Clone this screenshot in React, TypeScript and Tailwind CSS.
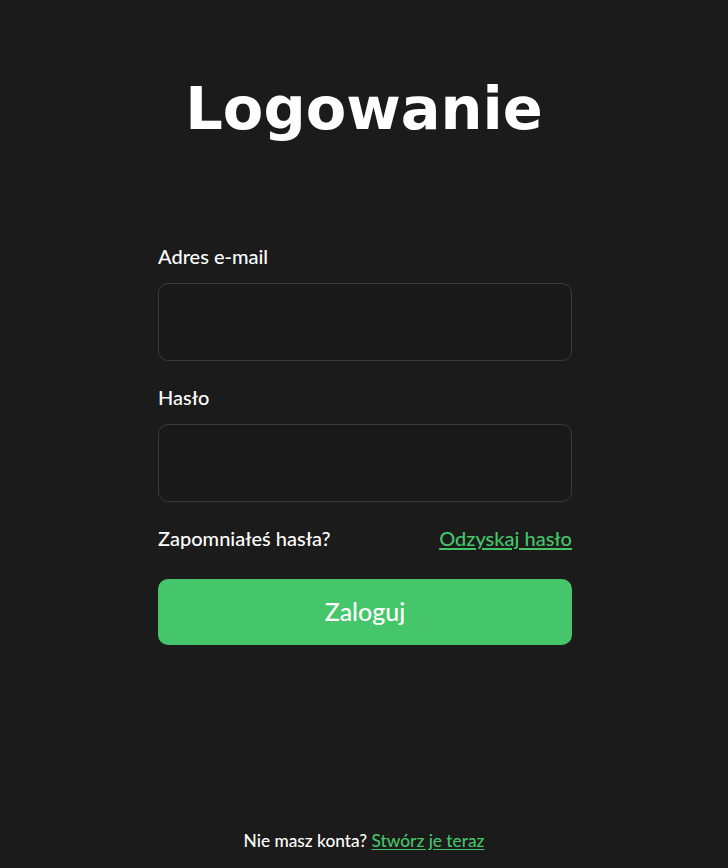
import React from "react";

const Field = ({ label, type }: { label: string; type: string }) => {
  return (
    <div className="flex flex-col">
      <label className="text-[20px] font-medium leading-[27px] text-white">{label}</label>
      <input
        type={type}
        className="mt-[13px] h-[78px] w-full rounded-[10px] border border-[#3a3a3a] bg-[#191919] px-4 text-white outline-none"
      />
    </div>
  );
};

const App = () => {
  return (
    <div
      className="flex h-screen flex-col items-center bg-[#1b1b1b] text-white"
      style={{ fontFamily: "Lato, 'Noto Sans', sans-serif" }}
    >
      <h1
        className="mt-[75px] text-[59px] font-bold leading-[68px] text-white"
        style={{ fontFamily: "'DejaVu Sans', sans-serif" }}
      >
        Logowanie
      </h1>

      <form className="mt-[100px] flex w-[414px] translate-x-[1px] flex-col">
        <Field label="Adres e-mail" type="email" />
        <div className="mt-[23px]">
          <Field label="Hasło" type="password" />
        </div>
        <div className="mt-[23px] flex items-center justify-between text-[20px] font-medium leading-[27px]">
          <span>Zapomniałeś hasła?</span>
          <a href="#" className="text-[#44c569] underline underline-offset-2">
            Odzyskaj hasło
          </a>
        </div>
        <button
          type="button"
          className="mt-[27px] h-[66px] w-full rounded-[10px] bg-[#45c66a] text-[25px] font-medium text-white"
        >
          Zaloguj
        </button>
      </form>

      <p className="mt-auto mb-[14px] text-[17.3px] font-medium leading-[26px]">
        Nie masz konta?{" "}
        <a href="#" className="text-[#44c569] underline underline-offset-2">
          Stwórz je teraz
        </a>
      </p>
    </div>
  );
};

export default App;
